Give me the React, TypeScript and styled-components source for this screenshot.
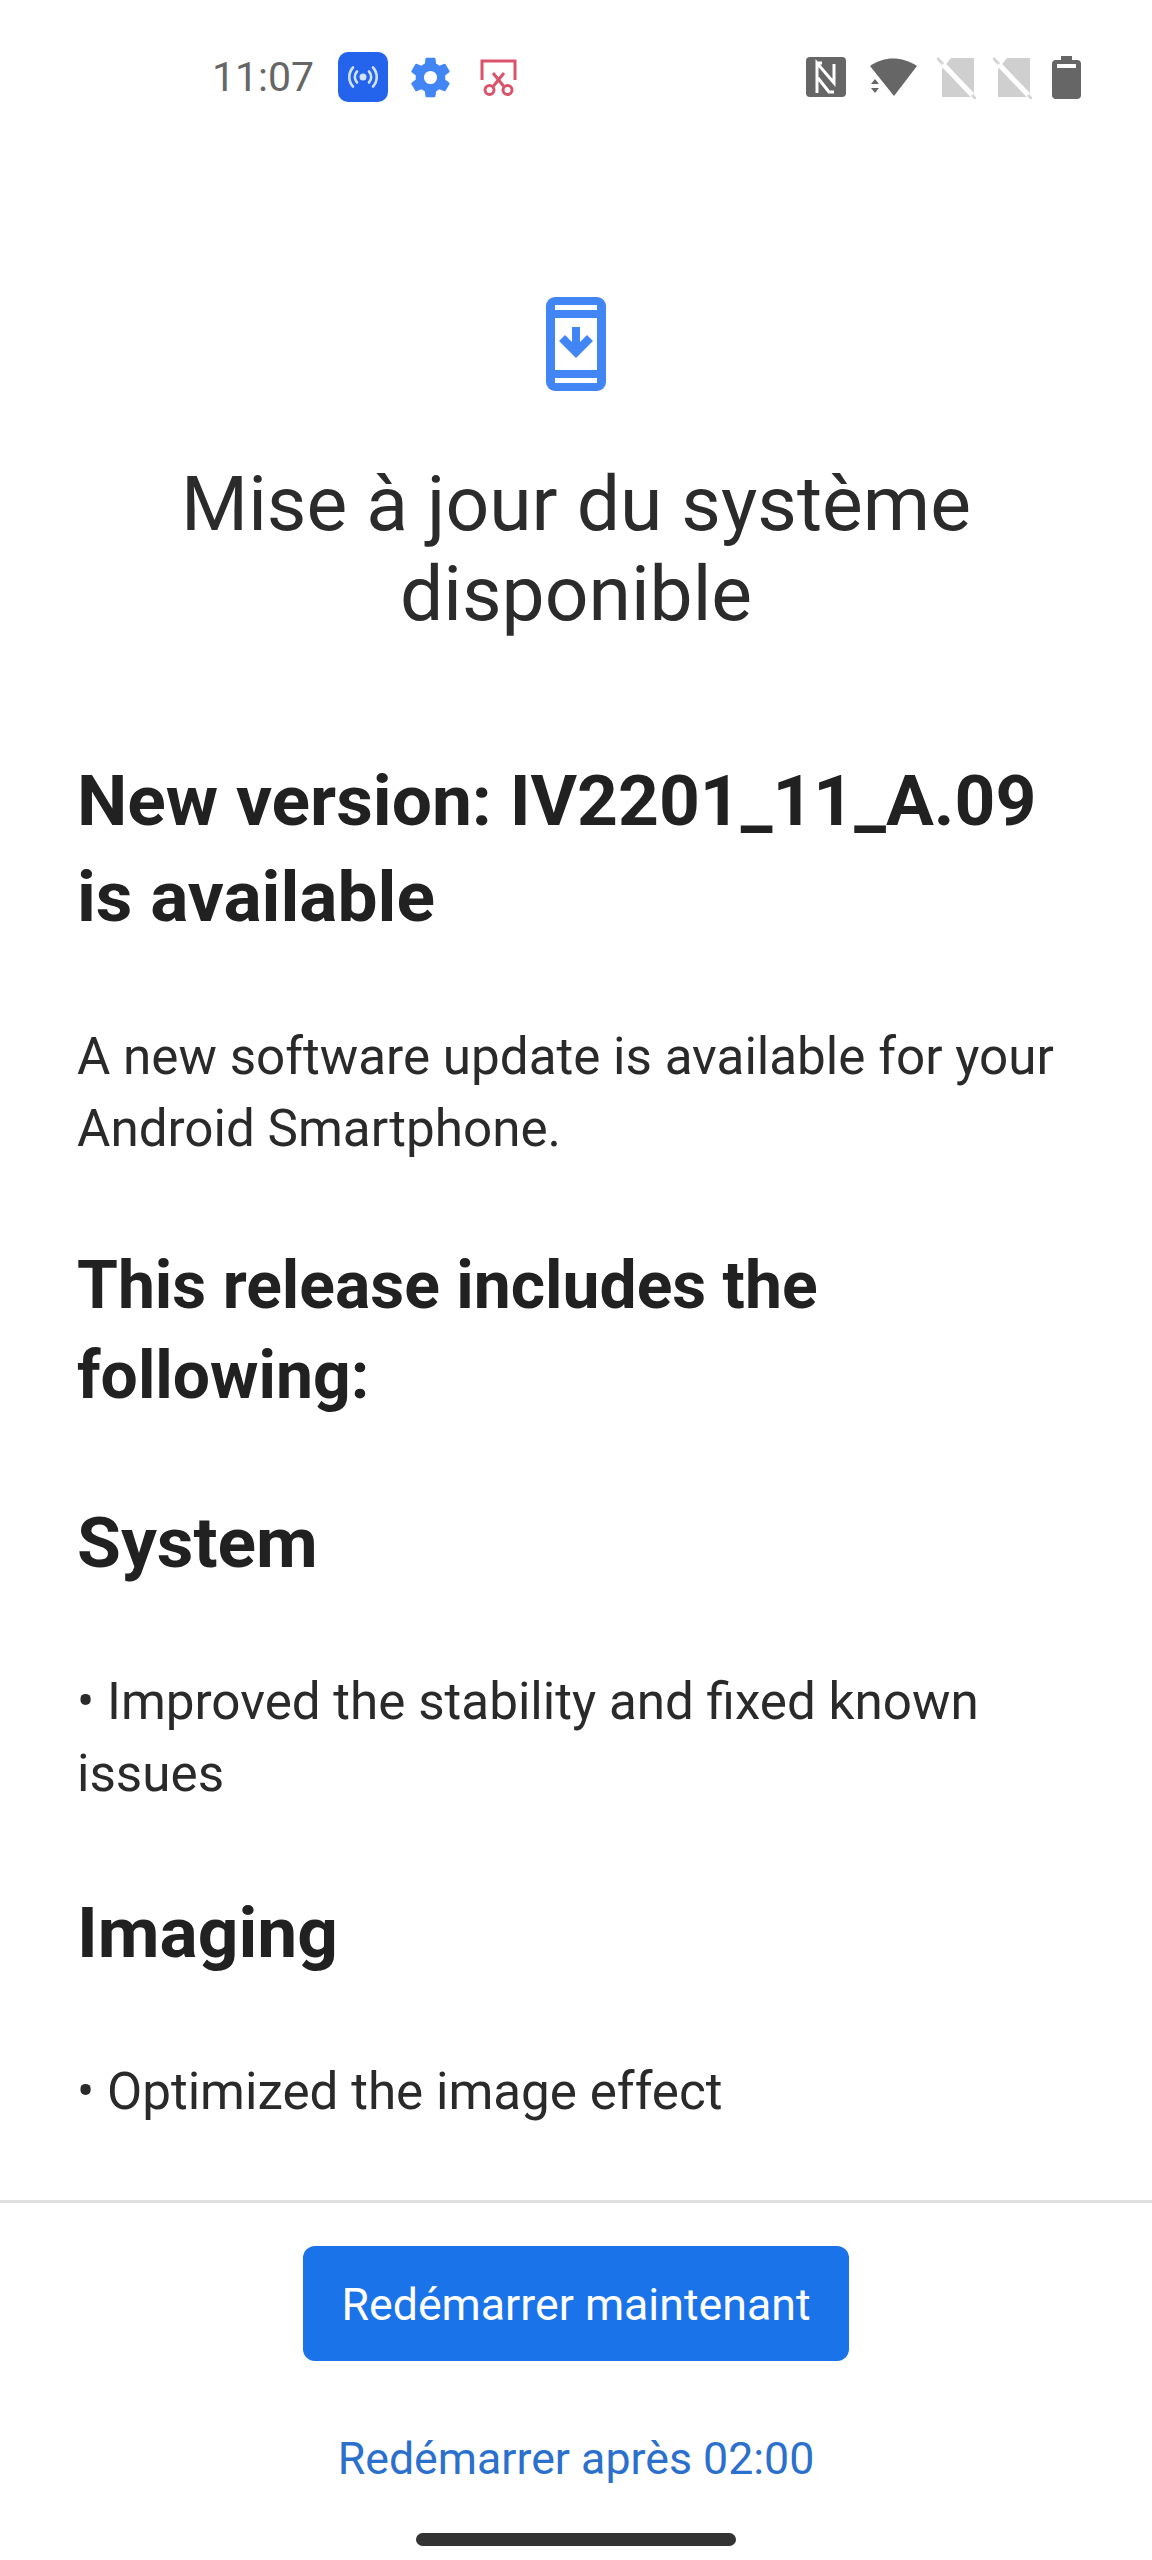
import styled, { createGlobalStyle } from 'styled-components';

const Global = createGlobalStyle`
  html, body {
    margin: 0;
    padding: 0;
    background: #fff;
  }
  * {
    box-sizing: border-box;
  }
`;

const Screen = styled.div`
  width: 1152px;
  height: 2560px;
  display: flex;
  flex-direction: column;
  background: #fff;
  font-family: Roboto, "Liberation Sans", sans-serif;
  color: #212121;
  overflow: hidden;
`;

const StatusBar = styled.div`
  height: 156px;
  padding: 47px 71px 0 212px;
  display: flex;
  align-items: flex-start;
  justify-content: space-between;
`;

const StatusGroup = styled.div`
  height: 60px;
  display: flex;
  align-items: center;
`;

const Clock = styled.span`
  font-size: 41px;
  color: #666;
`;

// status icons sit at uneven distances, so each one carries its own left gap
const Slot = styled.span<{ $left: number }>`
  display: flex;
  margin-left: ${(p) => p.$left}px;
`;

const Content = styled.main`
  flex: 1;
  padding: 0 77px;
`;

const HeroIcon = styled.div`
  display: flex;
  justify-content: center;
  margin-top: 141px;
`;

const Title = styled.h1`
  margin: 68px 0 0;
  font-size: 76.8px;
  line-height: 90px;
  font-weight: 400;
  text-align: center;
  color: #2b2b2b;
`;

const Heading = styled.h2<{ $top: number }>`
  margin: ${(p) => p.$top}px 0 0;
  font-size: 71.3px;
  line-height: 96px;
  font-weight: 700;
`;

const SubHeading = styled.h3`
  margin: 76px 0 0;
  font-size: 66px;
  line-height: 90px;
  font-weight: 700;
`;

const Body = styled.p<{ $top: number }>`
  margin: ${(p) => p.$top}px 0 0;
  font-size: 51.2px;
  line-height: 72px;
  font-weight: 400;
  color: #2a2a2a;
`;

const Footer = styled.footer`
  height: 360px;
  border-top: 3px solid #e0e0e0;
  display: flex;
  flex-direction: column;
  align-items: center;
  padding-top: 43px;
`;

const PrimaryButton = styled.button`
  width: 546px;
  height: 115px;
  padding: 3px 0 0;
  border: none;
  border-radius: 12px;
  background: #1a73e8;
  color: #fff;
  font: 400 44.7px Roboto, sans-serif;
`;

const TextButton = styled.button`
  margin-top: 72px;
  border: none;
  background: none;
  padding: 0;
  color: #2a70cc;
  font: 400 44.7px Roboto, sans-serif;
`;

const HomeBar = styled.div`
  margin-top: 48px;
  width: 320px;
  height: 13px;
  border-radius: 7px;
  background: #333;
`;

function HotspotIcon() {
  return (
    <svg width="50" height="50" viewBox="0 0 50 50">
      <rect width="50" height="50" rx="10" fill="#2463eb" />
      <circle cx="25" cy="25" r="3.5" fill="#cfe2ff" />
      <g fill="none" stroke="#cfe2ff" strokeWidth="2.6" strokeLinecap="round">
        <path d="M19 19.5a8 8 0 0 0 0 11M31 19.5a8 8 0 0 1 0 11" />
        <path d="M15 15.5a14 14 0 0 0 0 19M35 15.5a14 14 0 0 1 0 19" />
      </g>
    </svg>
  );
}

function GearIcon() {
  return (
    <svg width="41" height="41" viewBox="2.4 2 19.2 20" fill="#4285f4">
      <path d="M19.14 12.94c.04-.3.06-.61.06-.94s-.02-.64-.07-.94l2.03-1.58a.5.5 0 0 0 .12-.64l-1.92-3.32a.5.5 0 0 0-.6-.22l-2.39.96a7 7 0 0 0-1.62-.94l-.36-2.54a.5.5 0 0 0-.5-.42h-3.84a.5.5 0 0 0-.49.42l-.36 2.54c-.59.24-1.13.57-1.62.94l-2.39-.96a.5.5 0 0 0-.6.22L2.7 8.84a.5.5 0 0 0 .12.64l2.03 1.58c-.05.3-.09.63-.09.94s.02.64.07.94l-2.03 1.58a.5.5 0 0 0-.12.64l1.92 3.32c.12.22.37.29.6.22l2.39-.96c.5.38 1.03.7 1.62.94l.36 2.54c.05.24.24.42.49.42h3.84c.25 0 .45-.18.49-.42l.36-2.54c.59-.24 1.13-.56 1.62-.94l2.39.96c.22.08.47 0 .6-.22l1.92-3.32a.5.5 0 0 0-.12-.64l-2.01-1.58zM12 15.2a3.2 3.2 0 1 1 0-6.4 3.2 3.2 0 0 1 0 6.4z" />
    </svg>
  );
}

function ScreenshotIcon() {
  return (
    <svg width="37" height="37" viewBox="0 0 37 37" fill="none" stroke="#d9536a" strokeWidth="3">
      <path d="M2 21V2h33v19" />
      <path d="M13 14l10.5 13M24 14L13.5 27" />
      <circle cx="9.5" cy="31" r="4.5" />
      <circle cx="27.5" cy="31" r="4.5" />
    </svg>
  );
}

function NfcIcon() {
  return (
    <svg width="40" height="40" viewBox="0 0 40 40">
      <rect width="40" height="40" rx="4" fill="#666" />
      <path d="M11 36V6l17 20V7M11 6h5M28 35h-5L12 21" fill="none" stroke="#fff" strokeWidth="3" />
    </svg>
  );
}

function WifiIcon() {
  return (
    <svg width="48" height="40" viewBox="0 0 48 40">
      <path d="M1 9C15-1 33-1 48 9L25 39z" fill="#666" />
      <path d="M2 27l4-5 4 5zM2 31l4 5 4-5z" fill="#666" />
    </svg>
  );
}

function NoSimIcon() {
  return (
    <svg width="39" height="44" viewBox="0 0 39 44">
      <path d="M5 14L14 3h23v39H5z" fill="#cfcfcf" />
      <path d="M0 3l39 41" stroke="#fff" strokeWidth="5" />
      <path d="M0 3l6 6M35 40l4 4" stroke="#d6d6d6" strokeWidth="3" />
    </svg>
  );
}

function BatteryIcon() {
  return (
    <svg width="29" height="43" viewBox="0 0 29 43">
      <path d="M9 0h11v4h5a4 4 0 0 1 4 4v31a4 4 0 0 1-4 4H4a4 4 0 0 1-4-4V8a4 4 0 0 1 4-4h5z" fill="#666" />
      <rect x="5" y="8" width="19" height="4" fill="#fff" />
    </svg>
  );
}

function UpdateIcon() {
  return (
    <svg width="60" height="94" viewBox="0 0 60 94">
      <rect width="60" height="94" rx="9" fill="#4285f4" />
      <rect x="9" y="8" width="42" height="5" fill="#fff" />
      <rect x="9" y="21" width="42" height="52" fill="#fff" />
      <rect x="9" y="81" width="42" height="5" fill="#fff" />
      <path d="M26 30h8v15l7-7 6 6-17 17-17-17 6-6 7 7z" fill="#4285f4" />
    </svg>
  );
}

export default function App() {
  return (
    <Screen>
      <Global />
      <StatusBar>
        <StatusGroup>
          <Clock>11:07</Clock>
          <Slot $left={24}>
            <HotspotIcon />
          </Slot>
          <Slot $left={22}>
            <GearIcon />
          </Slot>
          <Slot $left={29}>
            <ScreenshotIcon />
          </Slot>
        </StatusGroup>
        <StatusGroup>
          <NfcIcon />
          <Slot $left={23}>
            <WifiIcon />
          </Slot>
          <Slot $left={20}>
            <NoSimIcon />
          </Slot>
          <Slot $left={17}>
            <NoSimIcon />
          </Slot>
          <Slot $left={20}>
            <BatteryIcon />
          </Slot>
        </StatusGroup>
      </StatusBar>
      <Content>
        <HeroIcon>
          <UpdateIcon />
        </HeroIcon>
        <Title>
          Mise à jour du système
          <br />
          disponible
        </Title>
        <Heading $top={114}>
          New version: IV2201_11_A.09
          <br />
          is available
        </Heading>
        <Body $top={76}>A new software update is available for your Android Smartphone.</Body>
        <SubHeading>This release includes the following:</SubHeading>
        <Heading $top={74}>System</Heading>
        <Body $top={75}>• Improved the stability and fixed known issues</Body>
        <Heading $top={75}>Imaging</Heading>
        <Body $top={75}>• Optimized the image effect</Body>
      </Content>
      <Footer>
        <PrimaryButton>Redémarrer maintenant</PrimaryButton>
        <TextButton>Redémarrer après 02:00</TextButton>
        <HomeBar />
      </Footer>
    </Screen>
  );
}
